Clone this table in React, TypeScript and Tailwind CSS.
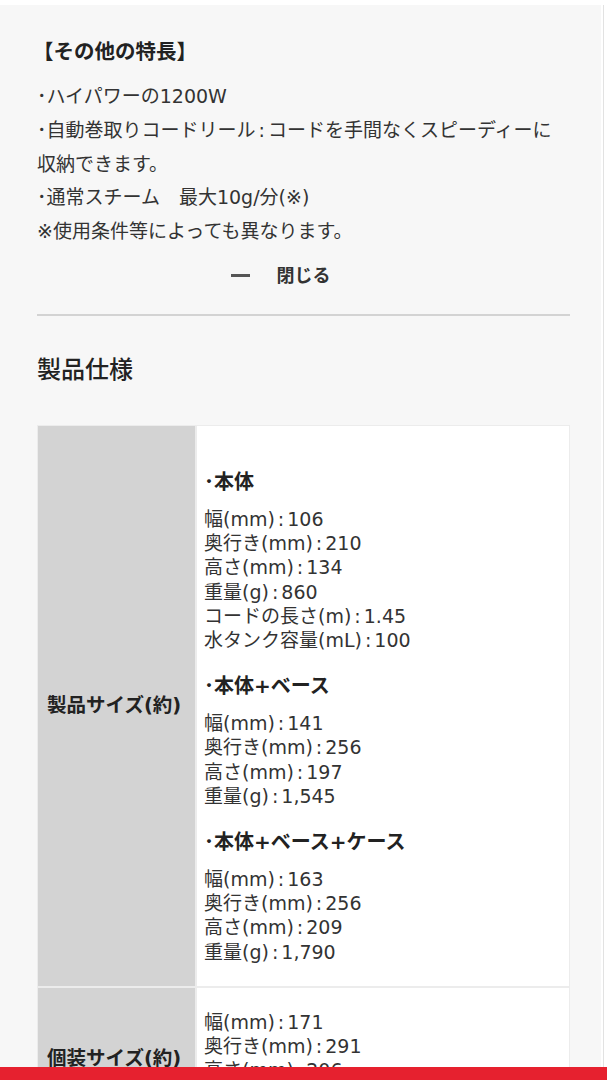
import * as React from 'react';

type SpecGroup = { title?: string; lines: string[] };
type SpecRow = { label: string; groups: SpecGroup[] };

const features = [
  '･ハイパワーの1200W',
  '･自動巻取りコードリール：コードを手間なくスピーディーに収納できます。',
  '･通常スチーム　最大10g/分(※)',
  '※使用条件等によっても異なります。',
];

const specs: SpecRow[] = [
  {
    label: '製品サイズ(約)',
    groups: [
      {
        title: '･本体',
        lines: [
          '幅(mm)：106',
          '奥行き(mm)：210',
          '高さ(mm)：134',
          '重量(g)：860',
          'コードの長さ(m)：1.45',
          '水タンク容量(mL)：100',
        ],
      },
      {
        title: '･本体+ベース',
        lines: ['幅(mm)：141', '奥行き(mm)：256', '高さ(mm)：197', '重量(g)：1,545'],
      },
      {
        title: '･本体+ベース+ケース',
        lines: ['幅(mm)：163', '奥行き(mm)：256', '高さ(mm)：209', '重量(g)：1,790'],
      },
    ],
  },
  {
    label: '個装サイズ(約)',
    groups: [{ lines: ['幅(mm)：171', '奥行き(mm)：291', '高さ(mm)：206', '重量(g)：2,000'] }],
  },
];

// narrow colon like the original font renders it
function withColon(text: string) {
  const i = text.indexOf('：');
  if (i < 0) return text;
  return (
    <>
      {text.slice(0, i)}
      <span className="mx-[3px]">:</span>
      {text.slice(i + 1)}
    </>
  );
}

function SpecCell({ groups }: { groups: SpecGroup[] }) {
  return (
    <div className="bg-white py-[22px] pl-[7px] pr-3">
      {groups.map((g, i) => (
        <div key={i}>
          {g.title && (
            <p className="mt-[20px] mb-[11px] text-[20px] leading-[28px] font-bold text-[#222]">
              {g.title}
            </p>
          )}
          {g.lines.map((l) => (
            <p key={l} className="text-[19px] leading-[24.2px] text-[#333]">
              {withColon(l)}
            </p>
          ))}
        </div>
      ))}
    </div>
  );
}

export default function App() {
  return (
    <div className="flex min-h-screen flex-col bg-white font-['DejaVu_Sans','Noto_Sans_CJK_JP',sans-serif]">
      <div className="h-[5px] bg-white" />
      <div className="flex flex-1">
        <main className="flex-1 bg-[#f7f7f7] pt-[30px] pb-10 pl-[37px] pr-[31px]">
          <h3 className="-ml-[4px] mb-[11px] text-[20.5px] leading-[34px] font-bold text-[#222]">
            【その他の特長】
          </h3>
          <div className="text-[19px] leading-[33.8px] text-[#333]">
            {features.map((f) => (
              <p key={f}>{withColon(f)}</p>
            ))}
          </div>

          <button
            type="button"
            className="mx-auto mt-[15px] flex items-center gap-[27px] text-[18px] leading-[24px] font-bold text-[#333]"
          >
            <span className="block h-[3px] w-[19px] bg-[#555]" />
            <span>閉じる</span>
            <span className="block w-[19px]" />
          </button>

          <div className="mt-[26px] h-[2px] bg-[#d3d3d3]" />

          <h2 className="mt-[38px] text-[24px] leading-[32px] font-medium text-[#222]">製品仕様</h2>

          <div className="mt-[39px] grid grid-cols-[157px_1fr] gap-[2px] bg-[#ececec] p-px">
            {specs.map((row) => (
              <React.Fragment key={row.label}>
                <div className="flex items-center bg-[#d3d3d3] pl-[9px] text-[19.5px] font-bold text-[#222]">
                  {row.label}
                </div>
                <SpecCell groups={row.groups} />
              </React.Fragment>
            ))}
          </div>
        </main>
        <aside className="flex w-[6px] bg-white pl-[2px]">
          <div className="w-px bg-[#e2e2e2]" />
        </aside>
      </div>
      <div className="fixed inset-x-0 bottom-0 h-[13px] bg-[#e6212f]" />
    </div>
  );
}
